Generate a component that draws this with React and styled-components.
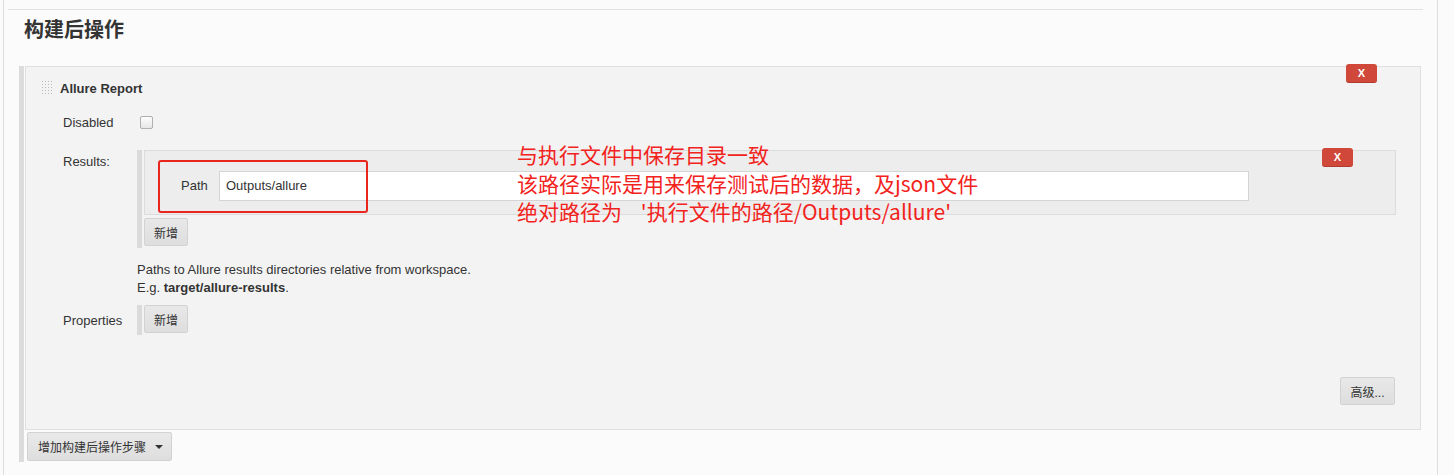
import styled, { createGlobalStyle } from "styled-components";

const Global = createGlobalStyle`
  body {
    margin: 0;
    background: #fbfbfb;
    font-family: "Liberation Sans", Arial, "Noto Sans CJK SC", sans-serif;
    font-size: 13px;
    color: #333;
  }
`;

export default function App() {
    return (
        <>
            <Global />
            <Page>
                <Rule />
                <Heading>构建后操作</Heading>
                <Section>
                    <Box>
                        <DeleteButton $top={-3} $right={43}>X</DeleteButton>
                        <BoxHeader>
                            <Handle />
                            <Title>Allure Report</Title>
                        </BoxHeader>
                        <Row $mt={19}>
                            <Label>Disabled</Label>
                            <Check />
                        </Row>
                        <Row $mt={20} $top>
                            <Label $pt={4}>Results:</Label>
                            <div>
                                <Repeat>
                                    <RepeatItem>
                                        <DeleteButton $top={-3} $right={42}>X</DeleteButton>
                                        <Marker />
                                        <Note>
                                            与执行文件中保存目录一致<br />
                                            该路径实际是用来保存测试后的数据，及json文件<br />
                                            绝对路径为&nbsp;&nbsp;&nbsp;&nbsp;'执行文件的路径/Outputs/allure'
                                        </Note>
                                        <PathLabel>Path</PathLabel>
                                        <Input defaultValue="Outputs/allure" />
                                    </RepeatItem>
                                    <SmallButton>新增</SmallButton>
                                </Repeat>
                                <Help>
                                    Paths to Allure results directories relative from workspace.<br />
                                    E.g. <b>target/allure-results</b>.
                                </Help>
                            </div>
                        </Row>
                        <Row $mt={8}>
                            <Label>Properties</Label>
                            <Repeat $pb={2}>
                                <SmallButton $mt={0}>新增</SmallButton>
                            </Repeat>
                        </Row>
                        <Footer>
                            <SmallButton $mt={0} $w={55}>高级...</SmallButton>
                        </Footer>
                    </Box>
                    <AddStep>
                        增加构建后操作步骤 <Caret />
                    </AddStep>
                </Section>
            </Page>
        </>
    );
}

const Page = styled.div`
    margin-left: 3px;
    width: 1435px;
    min-height: 475px;
    box-sizing: border-box;
    border-left: 1px solid #dedede;
    border-right: 1px solid #dedede;
    padding-top: 9px;
`;

const Rule = styled.div`
    margin-left: 4px;
    width: 1415px;
    border-top: 1px solid #e2e2e2;
`;

const Heading = styled.h2`
    margin: 10px 0 0 20px;
    font-size: 20px;
    line-height: 21px;
    font-weight: bold;
    color: #333;
    font-family: "Liberation Sans", "Noto Sans CJK SC", sans-serif;
`;

const Section = styled.div`
    margin: 25px 0 0 15px;
    width: 1397px;
    border-left: 5px solid #dcdcdc;
    padding-bottom: 1px;
`;

const Box = styled.div`
    position: relative;
    margin-left: 1px;
    height: 364px;
    box-sizing: border-box;
    background: #f3f3f3;
    border: 1px solid #e0e0e0;
    padding: 13px 25px 0 15px;
    display: flex;
    flex-direction: column;
`;

const DeleteButton = styled.span`
    position: absolute;
    top: ${p => p.$top}px;
    right: ${p => p.$right}px;
    width: 31px;
    height: 19px;
    border-radius: 3px;
    background: #d0483a;
    border-bottom: 1px solid #b03a2e;
    box-sizing: border-box;
    color: #fff;
    font-weight: bold;
    font-size: 11px;
    line-height: 18px;
    text-align: center;
`;

const BoxHeader = styled.div`
    display: flex;
    align-items: center;
    height: 16px;
`;

const Handle = styled.span`
    width: 12px;
    height: 16px;
    margin-right: 7px;
    background-image: radial-gradient(#b8b8b8 0.8px, transparent 1px);
    background-size: 3px 3px;
`;

const Title = styled.span`
    font-weight: bold;
    font-size: 13px;
`;

const Row = styled.div`
    display: grid;
    grid-template-columns: 74px 1fr;
    align-items: ${p => (p.$top ? "start" : "center")};
    margin-top: ${p => p.$mt}px;
    margin-left: 22px;
`;

const Label = styled.span`
    font-size: 13px;
    color: #333;
    padding-top: ${p => p.$pt || 0}px;
`;

const Check = styled.span`
    width: 11px;
    height: 11px;
    margin-left: 3px;
    border: 1px solid #b0b0b0;
    border-radius: 2px;
    background: linear-gradient(#fdfdfd, #e6e6e6);
`;

const Repeat = styled.div`
    border-left: 5px solid #dadada;
    padding-left: 2px;
    padding-bottom: ${p => (p.$pb === undefined ? 2 : p.$pb)}px;
`;

const RepeatItem = styled.div`
    position: relative;
    height: 65px;
    box-sizing: border-box;
    background: #ededed;
    border: 1px solid #dcdcdc;
    display: flex;
    align-items: center;
    padding: 6px 0 0 36px;
    width: 1252px;
`;

const Marker = styled.div`
    position: absolute;
    left: 13px;
    top: 9px;
    width: 210px;
    height: 53px;
    box-sizing: border-box;
    border: 2px solid #e8261e;
    border-radius: 3px;
`;

const Note = styled.div`
    position: absolute;
    left: 372px;
    top: -11px;
    color: #f2231d;
    font-family: "Noto Sans CJK SC", sans-serif;
    font-size: 21px;
    line-height: 28.5px;
    white-space: nowrap;
    z-index: 2;
`;

const PathLabel = styled.span`
    width: 38px;
    font-size: 13px;
`;

const Input = styled.input`
    width: 1030px;
    height: 30px;
    box-sizing: border-box;
    border: 1px solid #d5d5d5;
    background: #fff;
    padding: 0 6px;
    font-family: "Liberation Sans", Arial, sans-serif;
    font-size: 13px;
    color: #333;
    outline: none;
`;

const SmallButton = styled.span`
    display: inline-flex;
    align-items: center;
    justify-content: center;
    width: ${p => p.$w || 44}px;
    height: 28px;
    margin-top: ${p => (p.$mt === undefined ? 3 : p.$mt)}px;
    box-sizing: border-box;
    border: 1px solid #d2d2d2;
    border-radius: 2px;
    background: linear-gradient(#e8e8e8, #dedede);
    font-family: "Liberation Sans", "Noto Sans CJK SC", sans-serif;
    font-size: 12px;
    color: #333;
`;

const Help = styled.div`
    margin-top: 13px;
    font-size: 13px;
    line-height: 18px;
    color: #333;
    b {
        font-weight: bold;
    }
`;

const Footer = styled.div`
    margin-top: auto;
    margin-bottom: 24px;
    display: flex;
    justify-content: flex-end;
`;

const AddStep = styled.span`
    display: inline-flex;
    align-items: center;
    gap: 9px;
    margin: 2px 0 0 3px;
    width: 145px;
    height: 29px;
    box-sizing: border-box;
    padding-left: 10px;
    border: 1px solid #d2d2d2;
    border-radius: 2px;
    background: linear-gradient(#e9e9e9, #dedede);
    font-family: "Liberation Sans", "Noto Sans CJK SC", sans-serif;
    font-size: 12px;
    color: #333;
`;

const Caret = styled.span`
    width: 0;
    height: 0;
    border-left: 4px solid transparent;
    border-right: 4px solid transparent;
    border-top: 4px solid #333;
`;
